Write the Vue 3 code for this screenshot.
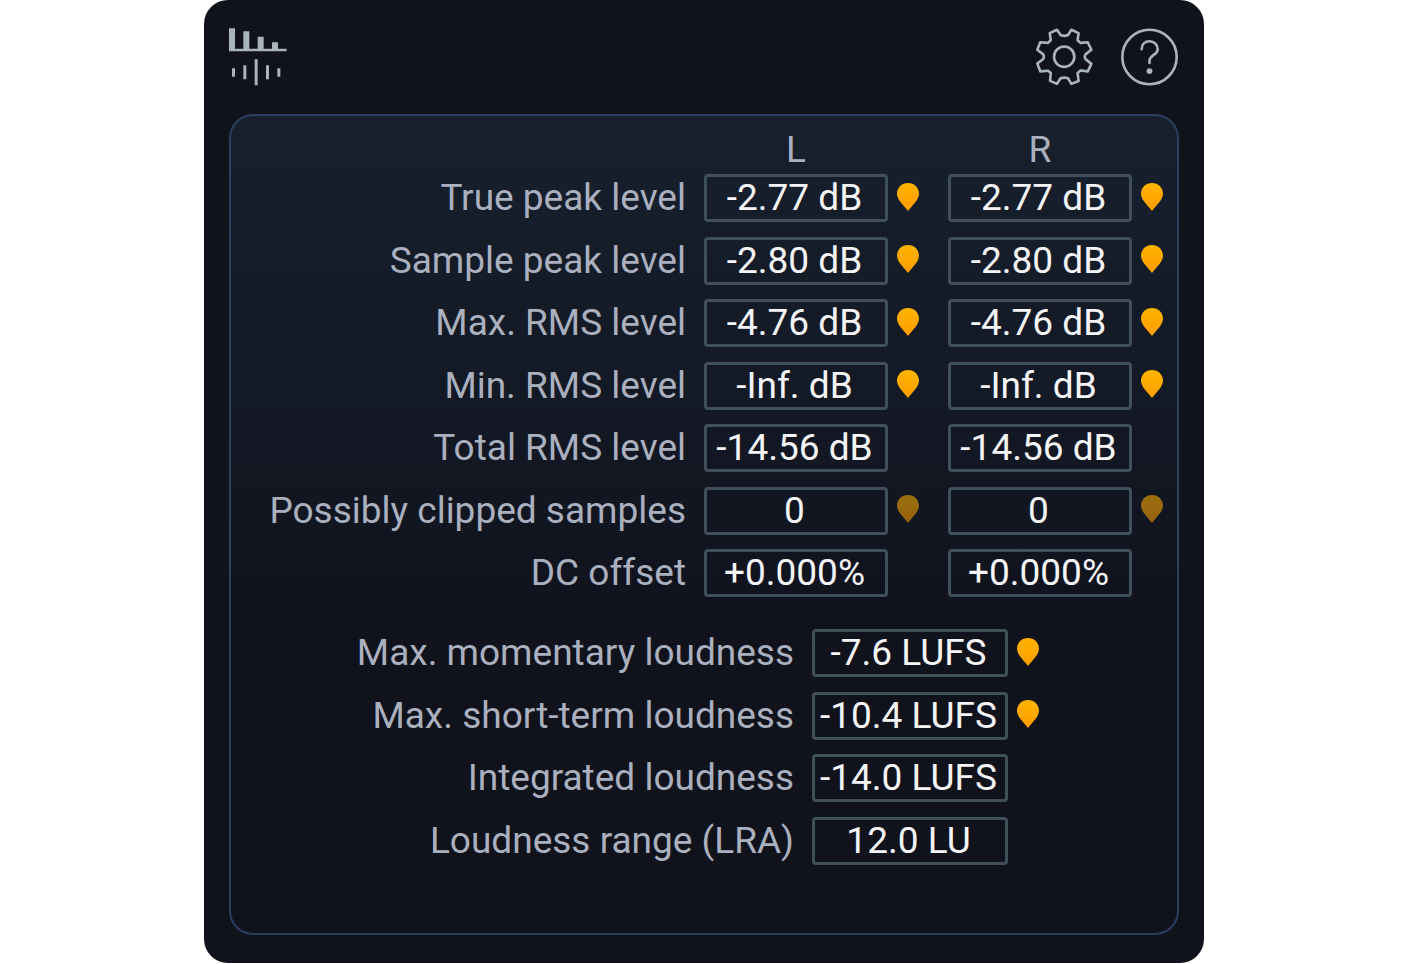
<template>
  <main class="stats-window">
    <header class="top-bar">
      <svg class="logo" viewBox="0 0 174 174" aria-hidden="true">
        <path d="M0 1h18v61h25V10h18v52h25V26h18v36h25V43h18v19h26v8H0z" />
        <path d="M9 121h9v25H9zM43 112h9v42h-9zM77 94h9v78h-9zM111 112h9v42h-9zM145 121h9v25h-9z" />
      </svg>
      <div class="actions">
        <button type="button" class="icon-button" aria-label="Settings">
          <svg viewBox="0 0 174 174">
            <path d="M42 14L64 4L75 20Q86 25 98 20L108 4L130 14L127 36L136 44L158 42L169 65L151 79Q147 86 151 93L169 108L158 131L136 128L127 136L130 160L108 169L98 152Q86 148 75 152L64 169L43 160L45 136L37 129L13 131L4 107L22 93Q26 86 22 79L4 65L13 42L36 44L45 36Z" />
            <circle cx="86" cy="86" r="31" />
          </svg>
        </button>
        <button type="button" class="icon-button" aria-label="Help">
          <svg viewBox="0 0 174 174">
            <circle cx="87" cy="87" r="83" />
            <path d="M63 63C63 48 73 39 87 39C101 39 112 49 112 63C112 81 87 80 87 99V105" />
            <circle class="dot" cx="87" cy="130" r="9" />
          </svg>
        </button>
      </div>
    </header>

    <section class="panel">
      <table class="levels">
        <thead>
          <tr>
            <td></td>
            <th scope="col">L</th>
            <td class="marker"></td>
            <th scope="col">R</th>
            <td class="marker"></td>
          </tr>
        </thead>
        <tbody>
          <tr v-for="row in levels" :key="row.label">
            <th scope="row">{{ row.label }}</th>
            <template v-for="channel in ['left', 'right']" :key="channel">
              <td class="value"><span class="readout">{{ row[channel] }}</span></td>
              <td class="marker">
                <button
                  v-if="row.marker"
                  type="button"
                  class="pin"
                  :disabled="row.marker === 'off'"
                  :aria-label="`Go to ${row.label}, ${channel}`"
                >
                  <svg viewBox="0 0 66 84"><path :d="pinPath" fill="url(#pin-fill)" /></svg>
                </button>
              </td>
            </template>
          </tr>
        </tbody>
      </table>

      <table class="loudness">
        <tbody>
          <tr v-for="row in loudness" :key="row.label">
            <th scope="row">{{ row.label }}</th>
            <td class="value"><span class="readout">{{ row.value }}</span></td>
            <td class="marker">
              <button v-if="row.marker" type="button" class="pin" :aria-label="`Go to ${row.label}`">
                <svg viewBox="0 0 66 84"><path :d="pinPath" fill="url(#pin-fill)" /></svg>
              </button>
            </td>
          </tr>
        </tbody>
      </table>
    </section>

    <svg class="defs" aria-hidden="true">
      <linearGradient id="pin-fill" x1="0" y1="0" x2="0" y2="1">
        <stop offset="0" stop-color="#ffb400" />
        <stop offset="1" stop-color="#ff9c00" />
      </linearGradient>
    </svg>
  </main>
</template>

<script setup>
const pinPath = 'M33 0C14 0 0 14 0 32C0 49 17 63 33 84C49 63 66 49 66 32C66 14 52 0 33 0Z';

const levels = [
  { label: 'True peak level', left: '-2.77 dB', right: '-2.77 dB', marker: 'on' },
  { label: 'Sample peak level', left: '-2.80 dB', right: '-2.80 dB', marker: 'on' },
  { label: 'Max. RMS level', left: '-4.76 dB', right: '-4.76 dB', marker: 'on' },
  { label: 'Min. RMS level', left: '-Inf. dB', right: '-Inf. dB', marker: 'on' },
  { label: 'Total RMS level', left: '-14.56 dB', right: '-14.56 dB' },
  { label: 'Possibly clipped samples', left: '0', right: '0', marker: 'off' },
  { label: 'DC offset', left: '+0.000%', right: '+0.000%' },
];

const loudness = [
  { label: 'Max. momentary loudness', value: '-7.6 LUFS', marker: 'on' },
  { label: 'Max. short-term loudness', value: '-10.4 LUFS', marker: 'on' },
  { label: 'Integrated loudness', value: '-14.0 LUFS' },
  { label: 'Loudness range (LRA)', value: '12.0 LU' },
];
</script>

<style>
body { background: #fff; }
</style>

<style scoped>
.stats-window {
  max-width: 1000px; margin: 0 auto; padding: 28px 25px; box-sizing: border-box;
  background: #10121c; border-radius: 24px; color: #abb0bf;
  font-family: Roboto, Arial, sans-serif; font-size: 37px; line-height: 48px;
}
.top-bar { display: flex; justify-content: space-between; margin-bottom: 28px; padding-right: 1px; }
.logo { width: 58px; height: 58px; fill: #a9b4bd; }
.actions { display: flex; gap: 28px; }
button { display: block; padding: 0; border: 0; background: none; cursor: pointer; }
button svg { display: block; width: 100%; height: 100%; }
.icon-button { width: 57px; height: 58px; }
.icon-button svg { fill: none; stroke: #a9b4bd; stroke-width: 8; stroke-linejoin: round; stroke-linecap: round; }
.icon-button .dot { fill: #a9b4bd; stroke: none; }

.panel {
  padding: 11px 0 61px; border: 2px solid #2d3f60; border-radius: 24px;
  background: linear-gradient(#17202d, #131925 35%, #10121c 65%);
}
table { width: 100%; border-collapse: collapse; }
th { font-weight: 400; }
th, td { padding: 0; height: 62px; }
tr:nth-child(even) > * { height: 63px; }
thead th, thead td { height: 40px; line-height: 34px; vertical-align: bottom; }
tbody th { padding-right: 18px; text-align: right; white-space: nowrap; }
.levels { margin-bottom: 18px; }
.levels .value { width: 184px; }
.levels .marker { width: 60px; }
.levels .marker:last-child { width: 45px; }
.loudness .value { width: 196px; }
.loudness .marker { width: 169px; }
.readout {
  display: block; box-sizing: border-box; height: 48px; padding-right: 3px; line-height: 41px;
  border: 3px solid #3f505b; border-radius: 4px;
  color: #f5f5f7; text-align: center; white-space: nowrap;
}
.pin { width: 22px; height: 28px; margin: 0 0 3px 9px; }
.pin:disabled { opacity: 0.57; cursor: default; }
.defs { position: absolute; width: 0; height: 0; }
</style>
